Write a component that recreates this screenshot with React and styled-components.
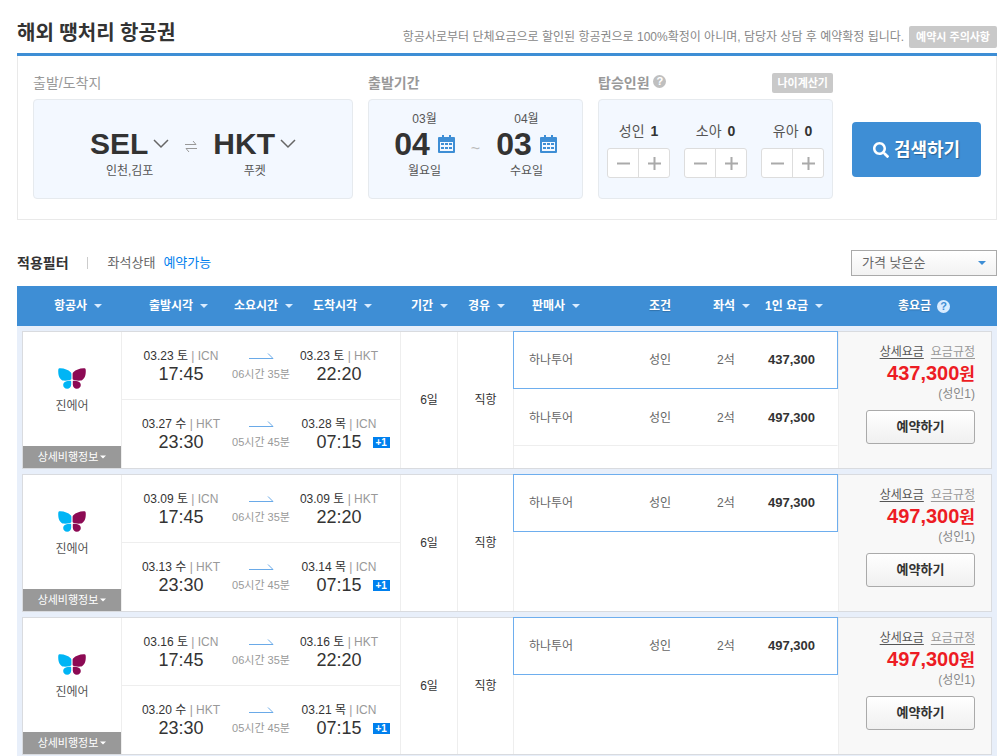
import React, { useState } from "react";
import styled, { createGlobalStyle } from "styled-components";
import { FaSearch } from "react-icons/fa";

const COLUMNS = [
  { name: "항공사", sortable: true },
  { name: "출발시각", sortable: true },
  { name: "소요시간", sortable: true },
  { name: "도착시각", sortable: true },
  { name: "기간", sortable: true },
  { name: "경유", sortable: true },
  { name: "판매사", sortable: true },
  { name: "조건" },
  { name: "좌석", sortable: true },
  { name: "1인 요금", sortable: true },
  { name: "총요금", help: true },
];

const makeLegs = (outDate, backDate, arriveDate) => [
  {
    from: { date: `${outDate} 토`, code: "ICN", time: "17:45" },
    duration: "06시간 35분",
    to: { date: `${outDate} 토`, code: "HKT", time: "22:20" },
  },
  {
    from: { date: `${backDate} 수`, code: "HKT", time: "23:30" },
    duration: "05시간 45분",
    to: { date: `${arriveDate} 목`, code: "ICN", time: "07:15", plus: "+1" },
  },
];

const FLIGHTS = [
  {
    id: 1,
    legs: makeLegs("03.23", "03.27", "03.28"),
    prices: ["437,300", "497,300"],
  },
  { id: 2, legs: makeLegs("03.09", "03.13", "03.14"), prices: ["497,300"] },
  { id: 3, legs: makeLegs("03.16", "03.20", "03.21"), prices: ["497,300"] },
];

const Caret = ({ color = "#fff" }) => (
  <svg width="8" height="4" viewBox="0 0 8 4" aria-hidden="true">
    <path d="M0 0h8L4 4z" fill={color} />
  </svg>
);

const Chevron = () => (
  <svg width="16" height="10" viewBox="0 0 16 10" aria-hidden="true">
    <path d="M1 1l7 7 7-7" fill="none" stroke="#666" strokeWidth="1.5" />
  </svg>
);

const SwapIcon = () => (
  <svg width="12" height="12" viewBox="0 0 12 12" aria-hidden="true">
    <path
      d="M0 4.5h11L8 1M12 8.500H1L4 12"
      fill="none"
      stroke="#999"
      strokeWidth="1"
    />
  </svg>
);

const CalendarIcon = () => (
  <svg width="17" height="18" viewBox="0 0 17 18" aria-hidden="true">
    <path
      d="M4 0h2v2h5V0h2v2h3a1 1 0 0 1 1 1v14a1 1 0 0 1-1 1H1a1 1 0 0 1-1-1V3a1 1 0 0 1 1-1h3z"
      fill="#3e8ed5"
    />
    <path d="M2 7h13v9H2z" fill="#f3f8ff" />
    <path
      d="M3 8h3v2H3zM7 8h3v2H7zM11 8h3v2h-3zM3 12h3v2H3zM7 12h3v2H7zM11 12h3v2h-3z"
      fill="#3e8ed5"
    />
  </svg>
);

const ArrowIcon = () => (
  <svg width="25" height="7" viewBox="0 0 25 7" aria-hidden="true">
    <path d="M0 5.500h24L19 .5" fill="none" stroke="#6aaae8" strokeWidth="1" />
  </svg>
);

const ButterflyLogo = () => (
  <svg width="28" height="21" viewBox="0 0 28 21" aria-hidden="true">
    <g fill="#00b5f5">
      <path d="M.3 1.800C.4.600 1.200.2 2.400.3c4.200.2 7.800 1.500 10.300 4 .5.500.7 1 .7 1.700v4.600c0 .8-.5 1.200-1.300 1.300-2.300.4-4.300.9-6.300.7C1.800 12.200-.2 7.200.3 1.800z" />
      <path d="M12.600 12.800c.4 0 .6.200.6.600v3.200c0 2.500-1.700 4.200-4 4.200-2.500 0-4-1.700-4-3.700 0-3 3.300-4.300 7.400-4.300z" />
    </g>
    <g fill="#8c0a54">
      <path d="M27.700 1.800c-.1-1.200-.9-1.600-2.100-1.500-4.200.2-7.800 1.500-10.300 4-.5.500-.7 1-.7 1.700v4.600c0 .8.5 1.200 1.300 1.300 2.300.4 4.300.9 6.300.7 4-.4 6-5.400 5.500-10.800z" />
      <path d="M15.400 12.800c-.4 0-.6.200-.6.600v3.200c0 2.500 1.700 4.200 4 4.200 2.500 0 4-1.700 4-3.700 0-3-3.300-4.300-7.400-4.300z" />
    </g>
  </svg>
);

const StepIcon = ({ plus }) => (
  <svg width="13" height="13" viewBox="0 0 13 13" aria-hidden="true">
    <path
      d={plus ? "M0 6.500h13M6.500 0v13" : "M0 6.500h13"}
      stroke="#aaa"
      strokeWidth="2"
    />
  </svg>
);

const Place = ({ code, name }) => (
  <Stack>
    <BigButton type="button">
      {code}
      <Chevron />
    </BigButton>
    <SubText>{name}</SubText>
  </Stack>
);

const TravelDate = ({ month, day, weekday }) => (
  <Stack>
    <SubText>{month}</SubText>
    <BigButton type="button" $day>
      {day}
      <CalendarIcon />
    </BigButton>
    <SubText>{weekday}</SubText>
  </Stack>
);

const Counter = ({ label, initial }) => {
  const [count, setCount] = useState(initial);

  return (
    <CounterBox>
      <CounterLabel>
        {label} <b>{count}</b>
      </CounterLabel>
      <Stepper>
        <button
          type="button"
          aria-label={`${label} 빼기`}
          onClick={() => setCount(Math.max(0, count - 1))}
        >
          <StepIcon />
        </button>
        <button
          type="button"
          aria-label={`${label} 더하기`}
          onClick={() => setCount(count + 1)}
        >
          <StepIcon plus />
        </button>
      </Stepper>
    </CounterBox>
  );
};

const Stop = ({ date, code, time, plus }) => (
  <StopBox>
    <StopDate>
      {date} <span>| {code}</span>
    </StopDate>
    <StopTime>
      {time}
      {plus && <PlusBadge>{plus}</PlusBadge>}
    </StopTime>
  </StopBox>
);

const FlightRow = ({ legs, prices }) => (
  <CardRow>
    <AirlineCell>
      <Airline>
        <ButterflyLogo />
        진에어
      </Airline>
      <DetailButton type="button">
        상세비행정보
        <Caret />
      </DetailButton>
    </AirlineCell>
    <ScheduleCell colSpan={3}>
      {legs.map((leg) => (
        <Leg key={leg.duration}>
          <Stop {...leg.from} />
          <Duration>
            <ArrowIcon />
            <span>{leg.duration}</span>
          </Duration>
          <Stop {...leg.to} />
        </Leg>
      ))}
    </ScheduleCell>
    <CenterCell $line>6일</CenterCell>
    <CenterCell>직항</CenterCell>
    <SellerCell colSpan={4}>
      {prices.map((price, i) => (
        <SellerRow key={price} $selected={i === 0}>
          <span>하나투어</span>
          <span>성인</span>
          <span>2석</span>
          <b>{price}</b>
        </SellerRow>
      ))}
    </SellerCell>
    <TotalCell>
      <FareLinks>
        <FareLink href="#detail" $dark>
          상세요금
        </FareLink>
        <FareLink href="#rule">요금규정</FareLink>
      </FareLinks>
      <TotalPrice>
        {prices[0]}
        <span>원</span>
      </TotalPrice>
      <Passenger>(성인1)</Passenger>
      <ReserveButton type="button">예약하기</ReserveButton>
    </TotalCell>
  </CardRow>
);

const App = () => {
  return (
    <>
      <GlobalStyle />
      <Page>
        <TitleBar>
          <h1>해외 땡처리 항공권</h1>
          <Notice>
            항공사로부터 단체요금으로 할인된 항공권으로 100%확정이 아니며,
            담당자 상담 후 예약확정 됩니다.
            <GrayButton type="button" $size="large">
              예약시 주의사항
            </GrayButton>
          </Notice>
        </TitleBar>

        <SearchPanel>
          <Field $grow>
            <FieldHead>출발/도착지</FieldHead>
            <FieldBox $gap="16px">
              <Place code="SEL" name="인천,김포" />
              <SwapButton type="button" aria-label="출발지와 도착지 바꾸기">
                <SwapIcon />
              </SwapButton>
              <Place code="HKT" name="푸켓" />
            </FieldBox>
          </Field>
          <Field $width="215px">
            <FieldHead $bold>출발기간</FieldHead>
            <FieldBox $gap="16px">
              <TravelDate month="03월" day="04" weekday="월요일" />
              <Tilde>~</Tilde>
              <TravelDate month="04월" day="03" weekday="수요일" />
            </FieldBox>
          </Field>
          <Field $width="235px">
            <FieldHead $bold>
              <span>
                탑승인원 <Help>?</Help>
              </span>
              <GrayButton type="button">나이계산기</GrayButton>
            </FieldHead>
            <FieldBox $gap="14px" $bottom="20px">
              <Counter label="성인" initial={1} />
              <Counter label="소아" initial={0} />
              <Counter label="유아" initial={0} />
            </FieldBox>
          </Field>
          <SearchButton type="button">
            <FaSearch size={16} />
            검색하기
          </SearchButton>
        </SearchPanel>

        <FilterBar>
          <strong>적용필터</strong>
          <FilterState>
            좌석상태 <em>예약가능</em>
          </FilterState>
          <SortBox>
            <select aria-label="정렬" defaultValue="low">
              <option value="low">가격 낮은순</option>
              <option value="high">가격 높은순</option>
            </select>
            <Caret color="#3e8ed5" />
          </SortBox>
        </FilterBar>

        <ResultTable>
          <thead>
            <HeadRow>
              {COLUMNS.map(({ name, sortable, help }) => (
                <th key={name} scope="col">
                  {sortable ? (
                    <SortButton type="button">
                      {name}
                      <Caret color="#d9ecff" />
                    </SortButton>
                  ) : (
                    name
                  )}
                  {help && <Help $light>?</Help>}
                </th>
              ))}
            </HeadRow>
          </thead>
          <tbody>
            {FLIGHTS.map((flight) => (
              <FlightRow key={flight.id} {...flight} />
            ))}
          </tbody>
        </ResultTable>
      </Page>
    </>
  );
};

const GlobalStyle = createGlobalStyle`
  * {
    box-sizing: border-box;
  }

  body {
    margin: 0;
    background-color: #fff;
    color: #666;
    font-family: "Liberation Sans", "Noto Sans CJK KR", sans-serif;
    font-size: 12px;
    line-height: 18px;
  }

  h1 {
    margin: 0;
  }

  button,
  select {
    margin: 0;
    padding: 0;
    border: 0;
    background: none;
    color: inherit;
    font: inherit;
    cursor: pointer;
  }

  svg {
    display: block;
    flex-shrink: 0;
  }
`;

const Page = styled.div`
  padding: 0 5px 0 17px;
`;

const TitleBar = styled.div`
  height: 56px;
  display: flex;
  justify-content: space-between;
  align-items: flex-end;
  border-bottom: 3px solid #3e8ed5;

  h1 {
    padding-bottom: 5px;
    color: #333;
    font-size: 20px;
    font-weight: bold;
    line-height: 30px;
    white-space: nowrap;
  }
`;

const Notice = styled.div`
  display: flex;
  align-items: center;
  gap: 5px;
  padding-bottom: 5px;
  color: #888;
  white-space: nowrap;
`;

const GrayButton = styled.button`
  height: ${({ $size }) => ($size === "large" ? "22px" : "20px")};
  padding: 0 ${({ $size }) => ($size === "large" ? "7px" : "5px")};
  border-radius: 2px;
  background-color: #c9c9c9;
  color: #fff;
  font-size: 11px;
  font-weight: bold;
  line-height: 20px;
`;

const SearchPanel = styled.div`
  display: flex;
  align-items: flex-start;
  gap: 15px;
  padding: 16px 15px 20px;
  border: 1px solid #e9e9e9;
  border-top: 0;
`;

const Field = styled.div`
  flex: ${({ $grow, $width }) => ($grow ? "1" : `0 0 ${$width}`)};
`;

const FieldHead = styled.div`
  height: 22px;
  margin-bottom: 5px;
  display: flex;
  justify-content: space-between;
  align-items: center;
  color: #999;
  font-size: 14px;
  font-weight: ${({ $bold }) => ($bold ? "bold" : "normal")};
`;

const FieldBox = styled.div`
  height: 100px;
  padding-bottom: ${({ $bottom }) => $bottom || "18px"};
  display: flex;
  justify-content: center;
  align-items: flex-end;
  gap: ${({ $gap }) => $gap};
  border: 1px solid #e6eaee;
  border-radius: 4px;
  background-color: #f3f8ff;
`;

const Stack = styled.div`
  display: flex;
  flex-direction: column;
  align-items: center;
`;

const BigButton = styled.button`
  height: 34px;
  padding-bottom: 2px;
  display: flex;
  align-items: center;
  gap: ${({ $day }) => ($day ? "8px" : "5px")};
  color: #333;
  font-size: ${({ $day }) => ($day ? "32px" : "30px")};
  font-weight: bold;
  line-height: 32px;
`;

const SubText = styled.span`
  color: #555;
`;

const SwapButton = styled.button`
  height: 12px;
  margin-bottom: 28px;
`;

const Tilde = styled.span`
  margin-bottom: 22px;
  color: #bbb;
  font-size: 16px;
`;

const Help = styled.i`
  width: 13px;
  height: 13px;
  display: inline-block;
  border-radius: 50%;
  background-color: ${({ $light }) => ($light ? "#d9ecff" : "#bfbfbf")};
  color: ${({ $light }) => ($light ? "#3e8ed5" : "#fff")};
  font-size: 11px;
  font-style: normal;
  font-weight: bold;
  line-height: 13px;
  text-align: center;
  text-shadow: none;
  vertical-align: 3px;
`;

const CounterBox = styled.div`
  width: 63px;
`;

const CounterLabel = styled.div`
  margin-bottom: 7px;
  color: #555;
  font-size: 14px;
  line-height: 20px;
  text-align: center;

  b {
    margin-left: 2px;
    color: #333;
  }
`;

const Stepper = styled.div`
  height: 30px;
  display: flex;
  border: 1px solid #ddd;
  border-radius: 3px;
  background-color: #fff;

  button {
    flex: 1;
    display: flex;
    justify-content: center;
    align-items: center;
  }

  button + button {
    border-left: 1px solid #ddd;
  }
`;

const SearchButton = styled.button`
  width: 129px;
  height: 55px;
  margin: 50px 0 0 4px;
  display: flex;
  justify-content: center;
  align-items: center;
  gap: 5px;
  border-radius: 4px;
  background-color: #3e8ed5;
  color: #fff;
  font-size: 18px;
  font-weight: bold;
  text-shadow: 1px 1px 1px rgba(0, 0, 0, 0.3);
`;

const FilterBar = styled.div`
  margin: 30px 0 10px;
  display: flex;
  align-items: center;
  font-size: 13px;

  strong {
    color: #333;
    font-size: 14px;
  }
`;

const FilterState = styled.span`
  margin-left: 18px;
  display: flex;
  align-items: center;
  gap: 8px;

  em {
    color: #0080ee;
    font-style: normal;
  }

  &::before {
    content: "";
    width: 1px;
    height: 12px;
    margin-right: 12px;
    background-color: #ccc;
  }
`;

const SortBox = styled.div`
  width: 146px;
  height: 26px;
  margin-left: auto;
  display: flex;
  align-items: center;
  position: relative;
  border: 1px solid #aaa;
  background: linear-gradient(#fff, #f2f2f2);

  select {
    width: 100%;
    height: 24px;
    padding: 0 24px 0 10px;
    appearance: none;
  }

  svg {
    position: absolute;
    right: 10px;
    pointer-events: none;
  }
`;

const ResultTable = styled.table`
  width: 100%;
  display: block;
  background-color: #e8effa;

  thead {
    display: block;
  }

  tbody {
    display: flex;
    flex-direction: column;
    gap: 5px;
    padding: 5px 5px 1px;
  }

  td {
    padding: 0;
  }
`;

const HeadRow = styled.tr`
  height: 40px;
  padding-left: 37px;
  display: grid;
  grid-template-columns: 95px 85px 79px 98px 57px 64px 1fr 64px 52px 133px 99px;
  align-items: center;
  background-color: #3e8ed5;
  color: #fff;

  th {
    display: flex;
    align-items: center;
    gap: 6px;
    padding: 0;
    text-align: left;
    text-shadow: 0 1px 1px rgba(0, 0, 0, 0.2);
    white-space: nowrap;
  }
`;

const SortButton = styled.button`
  display: flex;
  align-items: center;
  gap: 7px;
`;

const CardRow = styled.tr`
  display: grid;
  grid-template-columns: 99px 279px 57px 55px 1fr 153px;
  border: 1px solid #d9dbdf;
  background-color: #fff;
`;

const AirlineCell = styled.td`
  display: flex;
  flex-direction: column;
  border-right: 1px solid #eee;
`;

const Airline = styled.div`
  flex: 1;
  display: flex;
  flex-direction: column;
  align-items: center;
  gap: 8px;
  padding-top: 36px;
  color: #555;
`;

const DetailButton = styled.button`
  height: 22px;
  display: flex;
  justify-content: center;
  align-items: center;
  gap: 2px;
  background-color: #999;
  color: #fff;
  font-size: 11px;

  svg {
    width: 6px;
  }
`;

const ScheduleCell = styled.td`
  border-right: 1px solid #eee;
`;

const Leg = styled.div`
  height: 68px;
  padding: 15px 16px 0 12px;
  display: grid;
  grid-template-columns: 94px 66px 90px;

  &:first-child {
    border-bottom: 1px solid #eee;
  }
`;

const StopBox = styled.div`
  display: flex;
  flex-direction: column;
  align-items: center;
  color: #333;
  white-space: nowrap;
`;

const StopDate = styled.span`
  span {
    color: #999;
  }
`;

const StopTime = styled.span`
  position: relative;
  font-size: 18px;
`;

const PlusBadge = styled.span`
  height: 11px;
  padding: 0 3px;
  position: absolute;
  top: 4px;
  left: 100%;
  margin-left: 11px;
  background-color: #0080ee;
  color: #fff;
  font-size: 10px;
  font-weight: bold;
  line-height: 11px;
`;

const Duration = styled.div`
  display: flex;
  flex-direction: column;
  align-items: center;
  color: #999;
  font-size: 11px;
  white-space: nowrap;

  svg {
    margin: 6px 0 5px;
  }
`;

const CenterCell = styled.td`
  display: flex;
  justify-content: center;
  align-items: center;
  border-right: ${({ $line }) => ($line ? "1px solid #eee" : "0")};
  color: #333;
`;

const SellerCell = styled.td`
  border-left: 1px solid #eee;
`;

const SellerRow = styled.div`
  height: ${({ $selected }) => ($selected ? "58px" : "57px")};
  margin: ${({ $selected }) => ($selected ? "-1px" : "0")} 0 0 -1px;
  padding-left: 15px;
  display: grid;
  grid-template-columns: 1fr 68px 51px 69px;
  align-items: center;
  border: 1px solid;
  border-color: ${({ $selected }) =>
    $selected ? "#6eaeee" : "transparent transparent #eee"};

  b {
    color: #333;
    font-size: 13px;
  }
`;

const TotalCell = styled.td`
  display: flex;
  flex-direction: column;
  align-items: flex-end;
  border-left: 1px solid #eee;
  background-color: #f8f8f8;

  && {
    padding: 11px 16px 0 0;
  }
`;

const FareLinks = styled.div`
  display: flex;
  gap: 7px;
`;

const FareLink = styled.a`
  color: ${({ $dark }) => ($dark ? "#555" : "#999")};
  text-underline-offset: 2px;
`;

const TotalPrice = styled.strong`
  color: #ed1c24;
  font-size: 20px;
  line-height: 24px;

  span {
    font-size: 17px;
  }
`;

const Passenger = styled.span`
  color: #888;
  line-height: 14px;
`;

const ReserveButton = styled.button`
  width: 109px;
  height: 34px;
  margin-top: 9px;
  border: 1px solid #aaa;
  border-radius: 3px;
  background: linear-gradient(#fff, #f0f0f0);
  color: #333;
  font-size: 13px;
  font-weight: bold;
`;

export default App;
